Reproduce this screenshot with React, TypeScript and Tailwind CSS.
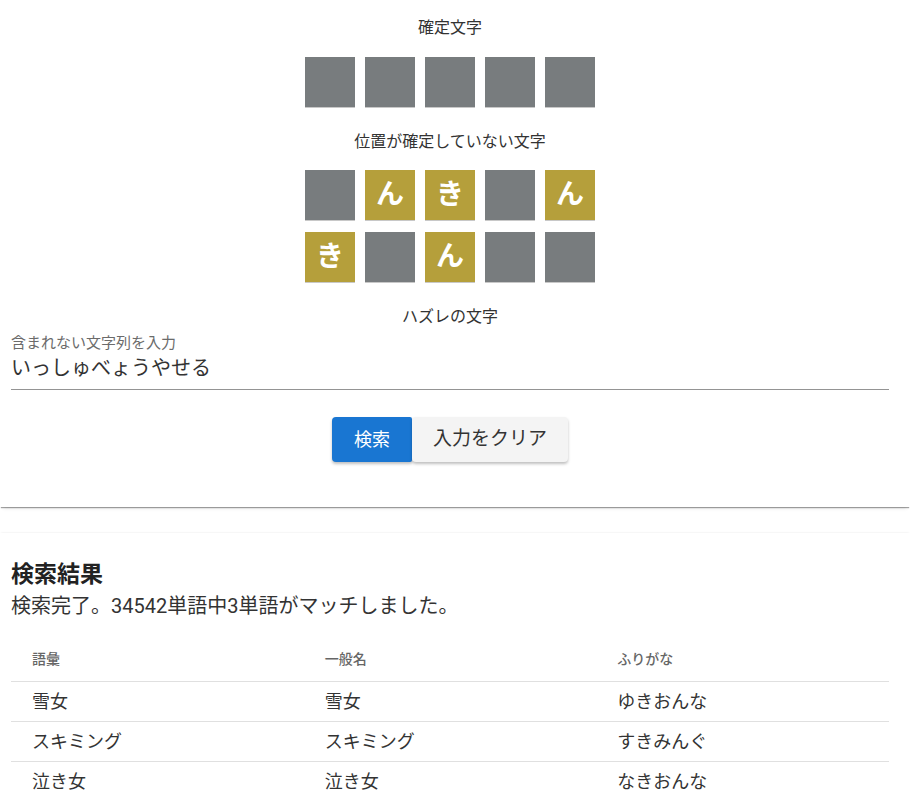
import React from "react";

type Tile = { ch?: string };

const TileBox = ({ ch }: Tile) => (
  <div
    className={`w-[50px] h-[50px] flex items-center justify-center text-white font-bold text-[28px] shadow-[0_1px_0_#c8c8c8] ${
      ch ? "bg-[#b59f3b]" : "bg-[#787c7e]"
    }`}
  >
    {ch}
  </div>
);

const TileRow = ({ tiles }: { tiles: (string | undefined)[] }) => (
  <div className="flex justify-center gap-[10px]">
    {tiles.map((t, i) => (
      <TileBox key={i} ch={t} />
    ))}
  </div>
);

const rows = [
  { word: "雪女", general: "雪女", kana: "ゆきおんな" },
  { word: "スキミング", general: "スキミング", kana: "すきみんぐ" },
  { word: "泣き女", general: "泣き女", kana: "なきおんな" },
];

export default function App() {
  return (
    <div className="w-full min-h-screen bg-white text-[#333] font-['Roboto','Noto_Sans_CJK_JP',sans-serif]">
      <div className="bg-white pl-[11px] pr-[21px] pt-[16px] pb-[45px] shadow-[0_2px_1px_-1px_rgba(0,0,0,0.35),0_4px_4px_-3px_rgba(0,0,0,0.12)]">
        <div className="text-center text-[16px] leading-[24px]">確定文字</div>
        <div className="mt-[17px]">
          <TileRow tiles={[undefined, undefined, undefined, undefined, undefined]} />
        </div>
        <div className="mt-[23px] text-center text-[16px] leading-[24px]">位置が確定していない文字</div>
        <div className="mt-[16px] flex flex-col gap-[12px]">
          <TileRow tiles={[undefined, "ん", "き", undefined, "ん"]} />
          <TileRow tiles={["き", undefined, "ん", undefined, undefined]} />
        </div>
        <div className="mt-[23px] text-center text-[16px] leading-[24px]">ハズレの文字</div>
        <div className="mt-[5px] border-b border-[#949494]">
          <div className="text-[15px] leading-[18px] text-[#6b6b6b]">含まれない文字列を入力</div>
          <div className="mt-[2px] text-[20px] leading-[28px] pb-[7px] text-[#333]">いっしゅべょうやせる</div>
        </div>
        <div className="mt-[27px] flex justify-center">
          <button className="h-[45px] px-[22px] rounded-l-[4px] rounded-r-[2px] bg-[#1976d2] text-white text-[18px] shadow-[0_2px_3px_rgba(0,0,0,0.25)]">
            検索
          </button>
          <button className="h-[45px] px-[21px] rounded-[4px] bg-[#f4f4f4] text-[#333] text-[19px] shadow-[0_2px_3px_rgba(0,0,0,0.25)]">
            入力をクリア
          </button>
        </div>
      </div>

      <div className="mt-[26px] bg-white pl-[11px] pr-[21px] pt-[27px] pb-[20px] shadow-[0_-1px_2px_-1px_rgba(0,0,0,0.1)]">
        <div className="text-[23px] leading-[30px] font-bold text-[#222]">検索結果</div>
        <div className="text-[20px] leading-[30px] mt-[1px]">検索完了。34542単語中3単語がマッチしました。</div>
        <table className="w-full mt-[18px] table-fixed border-collapse">
          <thead>
            <tr className="border-b border-[#e0e0e0]">
              <th className="text-left font-medium text-[14px] text-[#666] pl-[21px] h-[42px]">語彙</th>
              <th className="text-left font-medium text-[14px] text-[#666] pl-[21px]">一般名</th>
              <th className="text-left font-medium text-[14px] text-[#666] pl-[21px]">ふりがな</th>
            </tr>
          </thead>
          <tbody>
            {rows.map((r, i) => (
              <tr key={i} className={i < rows.length - 1 ? "border-b border-[#e0e0e0]" : ""}>
                <td className="pl-[21px] h-[40px] text-[18px]">{r.word}</td>
                <td className="pl-[21px] text-[18px]">{r.general}</td>
                <td className="pl-[21px] text-[18px]">{r.kana}</td>
              </tr>
            ))}
          </tbody>
        </table>
      </div>
    </div>
  );
}
